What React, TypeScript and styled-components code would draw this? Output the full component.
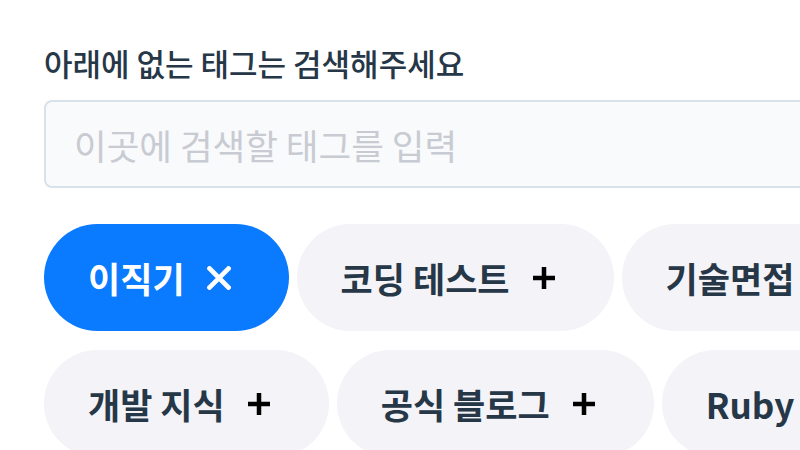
import React from "react";
import styled, { createGlobalStyle } from "styled-components";

const Global = createGlobalStyle`
  html, body { margin: 0; padding: 0; background: #ffffff; overflow: hidden; }
  body { font-family: "Noto Sans CJK KR", "Noto Sans", sans-serif; }
`;

const Page = styled.div`
  width: 940px;
  padding: 41px 0 0 44px;
`;

const Label = styled.div`
  font-size: 31px;
  line-height: 44px;
  color: #263747;
  font-weight: 500;
  margin-bottom: 15px;
`;

const Input = styled.input`
  box-sizing: border-box;
  display: block;
  width: 100%;
  height: 88px;
  border: 2px solid #d7e2eb;
  border-radius: 8px;
  background: #f9fafc;
  padding: 0 28px;
  font-family: inherit;
  font-size: 35.5px;
  color: #263747;
  outline: none;
  &::placeholder { color: #c8cbd2; }
`;

const Chips = styled.div`
  display: flex;
  flex-wrap: wrap;
  gap: 19px 8px;
  margin-top: 36px;
`;

const Chip = styled.button<{ $active?: boolean }>`
  display: flex;
  align-items: center;
  height: 107px;
  border: none;
  border-radius: 54px;
  padding: 0 55px 0 44px;
  background: ${(p) => (p.$active ? "#0a7aff" : "#f3f3f8")};
  color: ${(p) => (p.$active ? "#ffffff" : "#263747")};
  font-family: inherit;
  font-size: 35px;
  font-weight: 700;
  white-space: nowrap;
  cursor: pointer;
`;

const IconBox = styled.span`
  display: flex;
  align-items: center;
  justify-content: center;
  width: 30px;
  height: 30px;
  margin-left: 19px;
`;

const CloseIcon = () => (
  <svg width="24" height="24" viewBox="0 0 24 24">
    <path d="M2.5 2.5 L21.5 21.5 M21.5 2.5 L2.5 21.5" stroke="#ffffff" strokeWidth="4.6" strokeLinecap="square" />
  </svg>
);

const PlusIcon = () => (
  <svg width="24" height="24" viewBox="0 0 24 24">
    <path d="M12 1 V23 M1 12 H23" stroke="#000000" strokeWidth="4.5" />
  </svg>
);

const tags: { name: string; active?: boolean }[] = [
  { name: "이직기", active: true },
  { name: "코딩 테스트" },
  { name: "기술면접" },
  { name: "개발 지식" },
  { name: "공식 블로그" },
  { name: "Ruby" },
  { name: "JavaScript" },
  { name: "Python" },
];

export default function App() {
  return (
    <>
      <Global />
      <Page>
        <Label>아래에 없는 태그는 검색해주세요</Label>
        <Input placeholder="이곳에 검색할 태그를 입력" />
        <Chips>
          {tags.map((t) => (
            <Chip key={t.name} $active={t.active}>
              {t.name}
              <IconBox>{t.active ? <CloseIcon /> : <PlusIcon />}</IconBox>
            </Chip>
          ))}
        </Chips>
      </Page>
    </>
  );
}
